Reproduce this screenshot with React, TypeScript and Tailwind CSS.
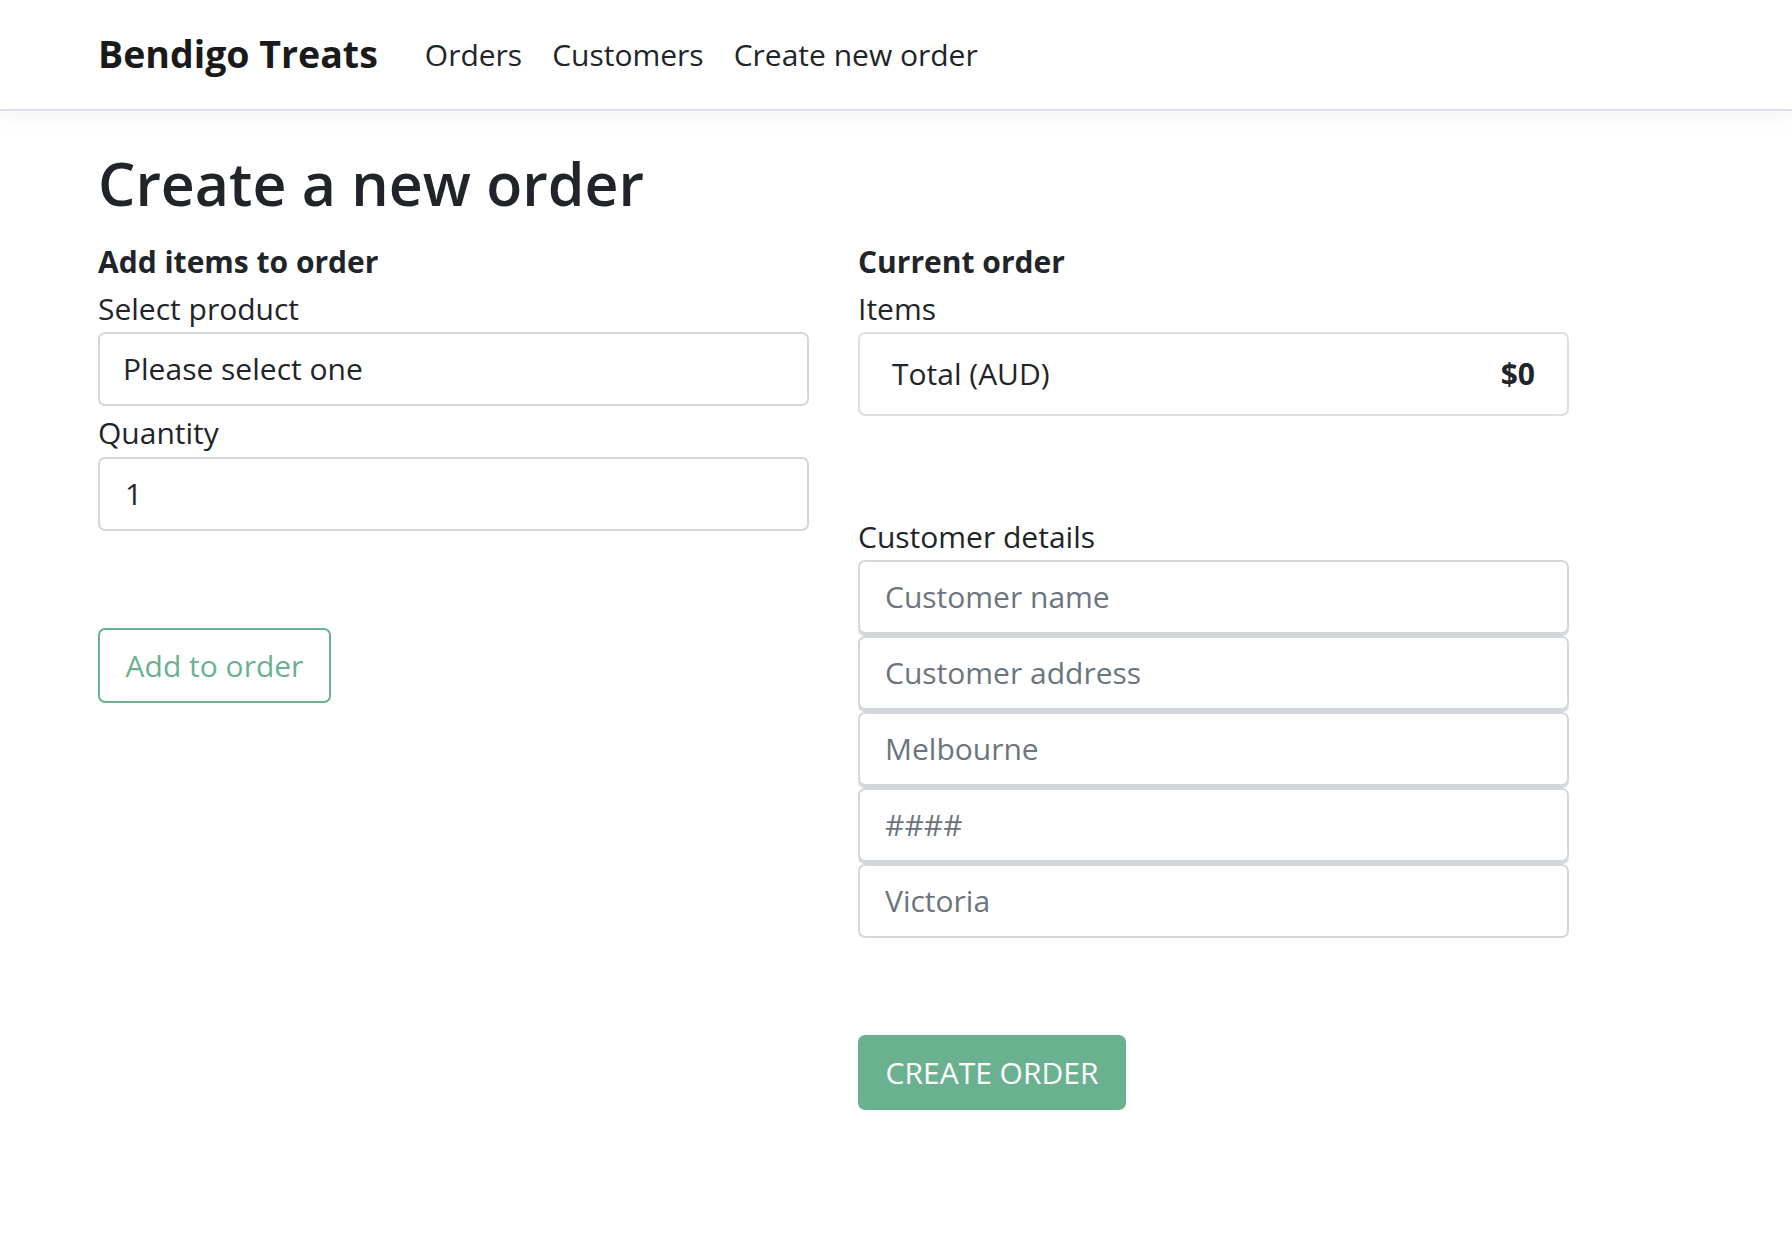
import React from 'react';

const font = "font-['Open_Sans',sans-serif]";

function Navbar() {
  return (
    <header className="h-[111px] bg-white border-b-2 border-[#dedee6] shadow-[0_6px_22px_rgba(0,0,0,0.05)] flex items-center px-[98px]">
      <span className="text-[37.5px] font-bold text-[#1a1a1a] mr-[32px]">Bendigo Treats</span>
      <nav className="flex items-center text-[30px] text-[#212529]">
        <a className="px-[15px]">Orders</a>
        <a className="px-[15px]">Customers</a>
        <a className="px-[15px]">Create new order</a>
      </nav>
    </header>
  );
}

function Field({ value, placeholder }: { value?: string; placeholder?: string }) {
  return (
    <input
      readOnly
      value={value}
      placeholder={placeholder}
      className="block w-full h-[74px] px-[25px] border-2 border-[#d3d7dc] rounded-[7px] bg-white text-[30px] text-[#212529] placeholder:text-[#6c757d] outline-none"
    />
  );
}

export default function App() {
  return (
    <div className={`${font} min-h-[1255px] bg-white text-[#212529]`}>
      <Navbar />
      <main className="pl-[98px] pt-[34px]">
        <h1 className="text-[59px] font-semibold leading-[1.3] mb-[16px]">Create a new order</h1>
        <div className="flex gap-[49px]">
          {/* left column */}
          <section className="w-[711px]">
            <h2 className="text-[30px] font-bold leading-[47px]">Add items to order</h2>
            <label className="block text-[30px] leading-[47px]">Select product</label>
            <select className="block w-full h-[74px] px-[23px] border-2 border-[#d3d7dc] rounded-[7px] bg-white text-[30px] text-[#212529] appearance-none outline-none">
              <option>Please select one</option>
            </select>
            <label className="block text-[30px] leading-[49px] mt-[2px]">Quantity</label>
            <Field value="1" />
            <button
              type="button"
              className="mt-[97px] h-[75px] w-[233px] border-2 border-[#6ab190] rounded-[7px] text-[#6ab190] text-[30px]"
            >
              Add to order
            </button>
          </section>

          {/* right column */}
          <section className="w-[711px]">
            <h2 className="text-[30px] font-bold leading-[47px]">Current order</h2>
            <label className="block text-[30px] leading-[47px]">Items</label>
            <div className="h-[84px] flex items-center justify-between px-[32px] border-2 border-[#dcdfe3] rounded-[7px]">
              <span className="text-[30px]">Total (AUD)</span>
              <span className="text-[30px] font-bold">$0</span>
            </div>
            <label className="block text-[30px] leading-[46px] mt-[98px]">Customer details</label>
            <div className="flex flex-col gap-[2px]">
              {['Customer name', 'Customer address', 'Melbourne', '####', 'Victoria'].map((p, i) => (
                <div key={p} className={i < 4 ? 'shadow-[0_2px_0_0_#d3d7dc] rounded-[7px]' : ''}>
                  <Field placeholder={p} />
                </div>
              ))}
            </div>
            <button
              type="button"
              className="mt-[97px] h-[75px] w-[268px] bg-[#6ab190] rounded-[7px] text-white text-[30px] uppercase"
            >
              Create order
            </button>
          </section>
        </div>
      </main>
    </div>
  );
}
